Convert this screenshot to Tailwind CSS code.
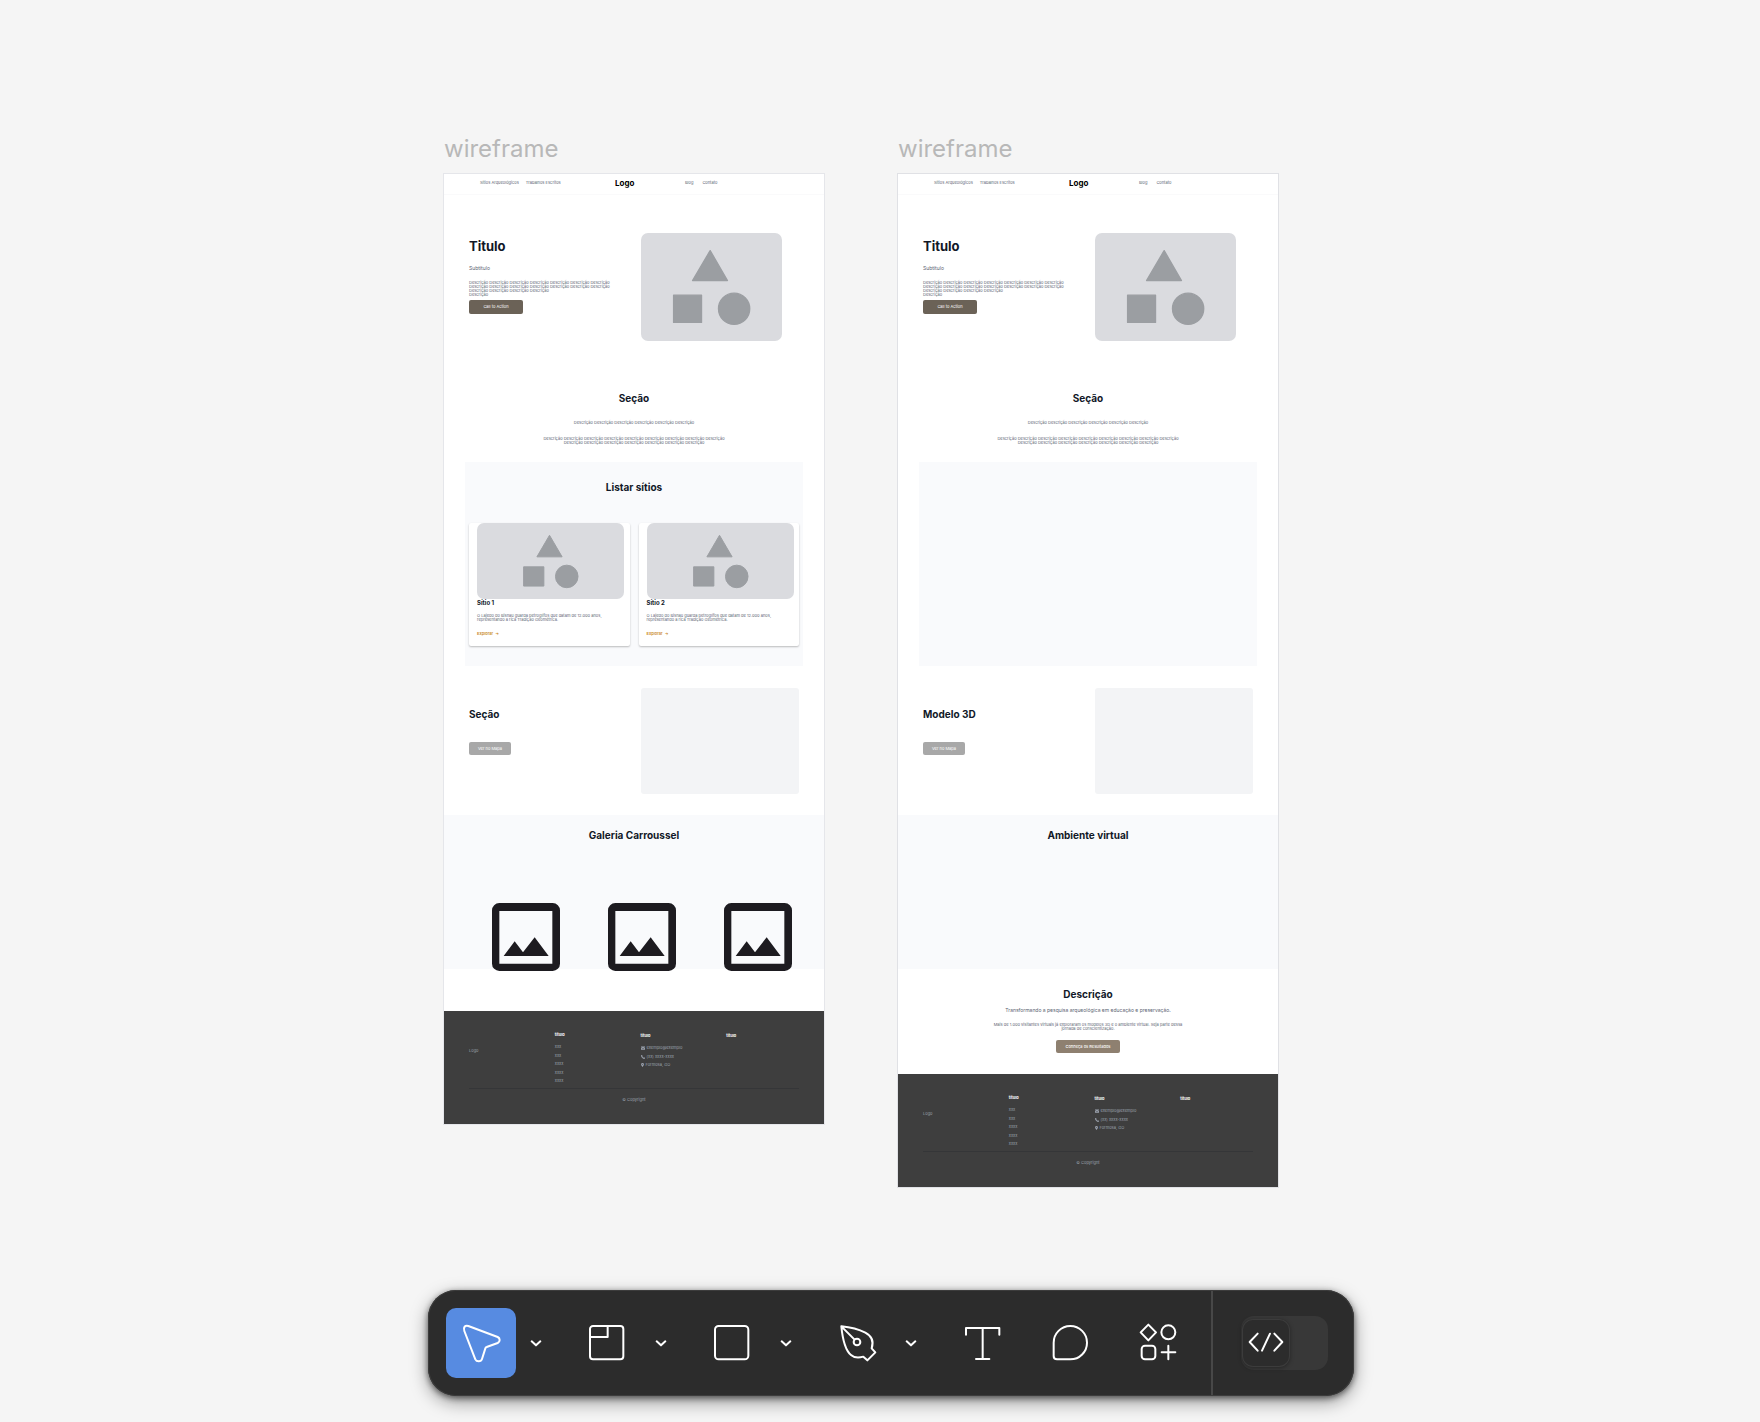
<!DOCTYPE html>
<html lang="pt-BR">
<head>
<meta charset="utf-8">
<meta name="viewport" content="width=device-width, initial-scale=1">
<title>wireframe</title>
<script src="https://cdn.jsdelivr.net/npm/@tailwindcss/browser@4"></script>
</head>
<body class="min-h-screen bg-[#f5f5f5] font-['Inter',sans-serif]">

<!-- Shared shapes -->
<svg class="hidden" aria-hidden="true">
  <symbol id="shapes-lg" viewBox="0 0 424 323">
    <g fill="#9b9ea2" stroke="#9b9ea2" stroke-width="4" stroke-linejoin="round">
      <path d="M208 52 L260 142 H155 Z"/><rect x="98" y="186" width="84" height="82"/><circle cx="280" cy="227" r="47"/>
    </g>
  </symbol>
  <symbol id="shapes-sm" viewBox="0 0 442 229">
    <g fill="#9b9ea2" stroke="#9b9ea2" stroke-width="3" stroke-linejoin="round">
      <path d="M218 37 L256 102 H180 Z"/><rect x="140" y="132" width="61" height="58"/><circle cx="270" cy="161" r="34"/>
    </g>
  </symbol>
  <symbol id="picture" viewBox="0 0 204 204">
    <path fill="#1d1b20" fill-rule="evenodd" d="M22 0H182A22 22 0 0 1 204 22V182A22 22 0 0 1 182 204H22A22 22 0 0 1 0 182V22A22 22 0 0 1 22 0ZM22 24V182H181V24Z"/>
    <path d="M35 159 L68 115 L93 148 L128 103 L170 159 Z" fill="#1d1b20"/>
  </symbol>
  <symbol id="mail" viewBox="0 0 12 12"><path fill="#9ca3af" d="M0 1.500h12v2L6 7 0 3.500zM0 5l6 3.500L12 5v6H0z"/></symbol>
  <symbol id="phone" viewBox="0 0 12 12"><path fill="#9ca3af" d="M0 1l3-1L5.200 3.500 4 4.700C4.700 6.200 5.800 7.300 7.300 8l1.200-1.200L12 8.500 11 12C5 12 0 7 0 1z"/></symbol>
  <symbol id="pin" viewBox="0 0 9 12"><path fill="#9ca3af" fill-rule="evenodd" d="M4.500 0a4.300 4.300 0 0 1 4.300 4.300C8.800 7 4.500 12 4.500 12S.2 7 .2 4.300A4.300 4.300 0 0 1 4.500 0zm0 3a1.400 1.400 0 1 0 0 2.800 1.400 1.400 0 0 0 0-2.800z"/></symbol>
  <symbol id="chevron" viewBox="0 0 36 36"><path d="M5 13 L18 25 L31 13" fill="none" stroke="#fff" stroke-width="6" stroke-linecap="round" stroke-linejoin="round"/></symbol>
</svg>

<main class="flex justify-center gap-[74px] pt-[133px] pr-[38px] pb-[170px] text-[4px] leading-[4px] text-[#5b6472]">

  <section>
    <h2 class="text-2xl leading-8 text-[#b8b8b8]">wireframe</h2>
    <article class="mt-[9px] w-[380px] bg-white shadow-[0_0_0_1px_#e5e6ea]">
      <header class="grid h-[21px] grid-cols-[135px_70px_1fr] items-center border-b border-[#fafafb] pb-[2px] pl-9">
        <nav class="flex gap-[7px]"><a href="#">Sítios Arqueológicos</a><a href="#">Trabalhos Escritos</a></nav>
        <strong class="text-[8px] leading-[10px] font-bold text-black">Logo</strong>
        <nav class="flex gap-[9px]"><a href="#">Blog</a><a href="#">Contato</a></nav>
      </header>
      <section class="grid grid-cols-[172px_141px] px-[25px] pt-[38px]">
        <div class="pt-[5px]">
          <h1 class="text-[13px] leading-4 font-bold text-[#111827]">Titulo</h1>
          <p class="mt-[11px] text-[5px] leading-[6px]">Subtítulo</p>
          <p class="mt-[10px] whitespace-nowrap">Descrição Descrição Descrição Descrição Descrição Descrição Descrição<br>Descrição Descrição Descrição Descrição Descrição Descrição Descrição<br>Descrição Descrição Descrição Descrição<br>Descrição</p>
          <button class="mt-[3px] block h-[14px] w-[54px] rounded-[2px] bg-[#6b6257] text-white">Call to Action</button>
        </div>
        <svg class="h-[108px] w-[141px] rounded-[7px] bg-[#dadbdf]"><use href="#shapes-lg"/></svg>
      </section>
      <section class="pt-[51px] text-center">
        <h2 class="text-[10px] leading-3 font-bold text-[#111827]">Seção</h2>
        <p class="mt-[17px]">Descrição Descrição Descrição Descrição Descrição Descrição</p>
        <p class="mt-[12px]">Descrição Descrição Descrição Descrição Descrição Descrição Descrição Descrição Descrição<br>Descrição Descrição Descrição Descrição Descrição Descrição Descrição</p>
      </section>
      <section class="mx-[21px] mt-[17px] h-[204px] bg-[#f9fafc] px-1 pt-[19px]">
        <h2 class="text-center text-[10px] leading-3 font-bold text-[#111827]">Listar sítios</h2>
        <div class="mt-[30px] grid grid-cols-2 gap-[9px]">
          <div class="h-[123px] rounded-[2px] bg-white px-[8px] shadow-[0_1px_2px_rgba(0,0,0,0.25)]">
            <svg class="h-[76px] w-[147px] rounded-[7px] bg-[#dadbdf]"><use href="#shapes-sm"/></svg>
            <h3 class="mt-px text-[6px] leading-[6px] font-bold text-[#111827]">Sítio 1</h3>
            <p class="mt-2 whitespace-nowrap">O Lajedo do Bisnau guarda petroglifos que datam de 12.000 anos,<br>representando a rica Tradição Geométrica.</p>
            <a href="#" class="mt-[10px] block font-semibold text-[#ca8a2a]">Explorar &nbsp;→</a>
          </div>
          <div class="h-[123px] rounded-[2px] bg-white px-[8px] shadow-[0_1px_2px_rgba(0,0,0,0.25)]">
            <svg class="h-[76px] w-[147px] rounded-[7px] bg-[#dadbdf]"><use href="#shapes-sm"/></svg>
            <h3 class="mt-px text-[6px] leading-[6px] font-bold text-[#111827]">Sítio 2</h3>
            <p class="mt-2 whitespace-nowrap">O Lajedo do Bisnau guarda petroglifos que datam de 12.000 anos,<br>representando a rica Tradição Geométrica.</p>
            <a href="#" class="mt-[10px] block font-semibold text-[#ca8a2a]">Explorar &nbsp;→</a>
          </div>
        </div>
      </section>
      <section class="grid grid-cols-[172px_1fr] px-[25px] pt-[22px] pb-[21px]">
        <div class="pt-5">
          <h2 class="text-[10px] leading-3 font-bold text-[#111827]">Seção</h2>
          <button class="mt-[22px] block h-[13px] w-[42px] rounded-[2px] bg-[#a8a8a8] text-white">Ver no Mapa</button>
        </div>
        <div class="h-[106px] rounded-[3px] bg-[#f3f4f6]"></div>
      </section>
      <section class="h-[154px] bg-[#f9fafc] pt-[14px]">
        <h2 class="text-center text-[10px] leading-3 font-bold text-[#111827]">Galeria Carroussel</h2>
        <div class="mt-[62px] flex gap-12 pl-12">
          <svg class="size-[68px]"><use href="#picture"/></svg>
          <svg class="size-[68px]"><use href="#picture"/></svg>
          <svg class="size-[68px]"><use href="#picture"/></svg>
        </div>
      </section>
      <footer class="mt-[42px] h-[113px] bg-[#3e3e3e] px-[25px] pt-[22px] text-[#9ca3af]">
        <div class="grid h-14 grid-cols-4 gap-x-[13px] border-b border-[#353638]">
          <p class="pt-4">Logo</p>
          <div>
            <h3 class="font-bold text-white">título</h3>
            <ul class="mt-2 flex h-[38px] flex-col justify-between"><li>xxx</li><li>xxx</li><li>xxxx</li><li>xxxx</li><li>xxxx</li></ul>
          </div>
          <div class="pt-px">
            <h3 class="font-bold text-white">título</h3>
            <ul class="mt-2 flex h-[21px] flex-col justify-between">
              <li class="flex gap-[2px]"><svg class="size-[4px]"><use href="#mail"/></svg>exemplo@exemplo</li>
              <li class="flex gap-[2px]"><svg class="size-[4px]"><use href="#phone"/></svg>(xx) xxxx-xxxx</li>
              <li class="flex gap-[2px]"><svg class="h-[4px] w-[3px]"><use href="#pin"/></svg>Formosa, GO</li>
            </ul>
          </div>
          <h3 class="pt-px font-bold text-white">título</h3>
        </div>
        <p class="mt-[9px] text-center">© Copyright</p>
      </footer>
    </article>
  </section>

  <section>
    <h2 class="text-2xl leading-8 text-[#b8b8b8]">wireframe</h2>
    <article class="mt-[9px] w-[380px] bg-white shadow-[0_0_0_1px_#e0e1e5]">
      <header class="grid h-[21px] grid-cols-[135px_70px_1fr] items-center border-b border-[#fafafb] pb-[2px] pl-9">
        <nav class="flex gap-[7px]"><a href="#">Sítios Arqueológicos</a><a href="#">Trabalhos Escritos</a></nav>
        <strong class="text-[8px] leading-[10px] font-bold text-black">Logo</strong>
        <nav class="flex gap-[9px]"><a href="#">Blog</a><a href="#">Contato</a></nav>
      </header>
      <section class="grid grid-cols-[172px_141px] px-[25px] pt-[38px]">
        <div class="pt-[5px]">
          <h1 class="text-[13px] leading-4 font-bold text-[#111827]">Titulo</h1>
          <p class="mt-[11px] text-[5px] leading-[6px]">Subtítulo</p>
          <p class="mt-[10px] whitespace-nowrap">Descrição Descrição Descrição Descrição Descrição Descrição Descrição<br>Descrição Descrição Descrição Descrição Descrição Descrição Descrição<br>Descrição Descrição Descrição Descrição<br>Descrição</p>
          <button class="mt-[3px] block h-[14px] w-[54px] rounded-[2px] bg-[#6b6257] text-white">Call to Action</button>
        </div>
        <svg class="h-[108px] w-[141px] rounded-[7px] bg-[#dadbdf]"><use href="#shapes-lg"/></svg>
      </section>
      <section class="pt-[51px] text-center">
        <h2 class="text-[10px] leading-3 font-bold text-[#111827]">Seção</h2>
        <p class="mt-[17px]">Descrição Descrição Descrição Descrição Descrição Descrição</p>
        <p class="mt-[12px]">Descrição Descrição Descrição Descrição Descrição Descrição Descrição Descrição Descrição<br>Descrição Descrição Descrição Descrição Descrição Descrição Descrição</p>
      </section>
      <div class="mx-[21px] mt-[17px] h-[204px] bg-[#f9fafc]"></div>
      <section class="grid grid-cols-[172px_1fr] px-[25px] pt-[22px] pb-[21px]">
        <div class="pt-5">
          <h2 class="text-[10px] leading-3 font-bold text-[#111827]">Modelo 3D</h2>
          <button class="mt-[22px] block h-[13px] w-[42px] rounded-[2px] bg-[#a8a8a8] text-white">Ver no Mapa</button>
        </div>
        <div class="h-[106px] rounded-[3px] bg-[#f3f4f6]"></div>
      </section>
      <section class="h-[154px] bg-[#f9fafc] pt-[14px]">
        <h2 class="text-center text-[10px] leading-3 font-bold text-[#111827]">Ambiente virtual</h2>
      </section>
      <section class="h-[105px] pt-[19px] text-center">
        <h2 class="text-[10px] leading-3 font-bold text-[#111827]">Descrição</h2>
        <p class="mt-[7px] text-[5px] leading-[6px]">Transformando a pesquisa arqueológica em educação e preservação.</p>
        <p class="mt-[10px]">Mais de 1.000 visitantes virtuais já exploraram os modelos 3D e o ambiente virtual. Seja parte dessa<br>jornada de conscientização.</p>
        <button class="mx-auto mt-[9px] block h-[13px] w-16 rounded-[2px] bg-[#8e8070] font-medium text-white">Conheça os Resultados</button>
      </section>
      <footer class="h-[113px] bg-[#3e3e3e] px-[25px] pt-[22px] text-[#9ca3af]">
        <div class="grid h-14 grid-cols-4 gap-x-[13px] border-b border-[#353638]">
          <p class="pt-4">Logo</p>
          <div>
            <h3 class="font-bold text-white">título</h3>
            <ul class="mt-2 flex h-[38px] flex-col justify-between"><li>xxx</li><li>xxx</li><li>xxxx</li><li>xxxx</li><li>xxxx</li></ul>
          </div>
          <div class="pt-px">
            <h3 class="font-bold text-white">título</h3>
            <ul class="mt-2 flex h-[21px] flex-col justify-between">
              <li class="flex gap-[2px]"><svg class="size-[4px]"><use href="#mail"/></svg>exemplo@exemplo</li>
              <li class="flex gap-[2px]"><svg class="size-[4px]"><use href="#phone"/></svg>(xx) xxxx-xxxx</li>
              <li class="flex gap-[2px]"><svg class="h-[4px] w-[3px]"><use href="#pin"/></svg>Formosa, GO</li>
            </ul>
          </div>
          <h3 class="pt-px font-bold text-white">título</h3>
        </div>
        <p class="mt-[9px] text-center">© Copyright</p>
      </footer>
    </article>
  </section>
</main>

<!-- Floating toolbar -->
<div class="fixed inset-x-0 bottom-[26px] flex justify-center pl-[22px]">
  <div role="toolbar" aria-label="Ferramentas" class="flex h-[106px] items-center rounded-[28px] bg-[#2c2c2c] pr-[26px] pl-[18px] shadow-[inset_0_0_0_1px_#3c3c3c,0_2px_6px_rgba(0,0,0,0.55),0_6px_18px_rgba(0,0,0,0.4)]">
    <div class="flex gap-[15px]">
      <div class="flex">
        <button aria-label="Mover" class="flex size-[70px] items-center justify-center rounded-[10px] bg-[#578be1]">
          <svg class="size-10 overflow-visible" viewBox="0 0 120 120" fill="none" stroke="#fff" stroke-width="6" stroke-linejoin="round"><path d="M10 24 C6 13 12 6 22 9 L110 42 C118 46 118 56 110 60 L77 72 Q74 73 73 76 L63 108 C60 117 47 117 43 109 Z"/></svg>
        </button>
        <button aria-label="Opções de mover" class="flex w-10 items-center justify-center"><svg class="size-3"><use href="#chevron"/></svg></button>
      </div>
      <div class="flex">
        <button aria-label="Quadro" class="flex size-[70px] items-center justify-center">
          <svg class="size-10 overflow-visible" viewBox="0 0 120 120" fill="none" stroke="#fff" stroke-width="6" stroke-linejoin="round"><rect x="12" y="9" width="100" height="100" rx="9"/><path d="M65 9 V42 H12"/></svg>
        </button>
        <button aria-label="Opções de quadro" class="flex w-10 items-center justify-center"><svg class="size-3"><use href="#chevron"/></svg></button>
      </div>
      <div class="flex">
        <button aria-label="Retângulo" class="flex size-[70px] items-center justify-center">
          <svg class="size-10 overflow-visible" viewBox="0 0 120 120" fill="none" stroke="#fff" stroke-width="6"><rect x="12" y="9" width="100" height="100" rx="11"/></svg>
        </button>
        <button aria-label="Opções de forma" class="flex w-10 items-center justify-center"><svg class="size-3"><use href="#chevron"/></svg></button>
      </div>
      <div class="flex">
        <button aria-label="Caneta" class="flex size-[70px] items-center justify-center">
          <svg class="size-10 overflow-visible" viewBox="0 0 120 120" fill="none" stroke="#fff" stroke-width="6" stroke-linejoin="round" stroke-linecap="round"><path d="M16 10 C45 13 70 20 88 29 C111 41 113 58 107 76 L118 88 L94 112 L82 101 C72 104 55 105 45 96 C28 82 20 50 16 10 L55 49"/><circle cx="63" cy="57" r="10"/></svg>
        </button>
        <button aria-label="Opções de caneta" class="flex w-10 items-center justify-center"><svg class="size-3"><use href="#chevron"/></svg></button>
      </div>
    </div>
    <div class="ml-4 flex gap-[18px]">
      <button aria-label="Texto" class="flex size-[70px] items-center justify-center">
        <svg class="size-10 overflow-visible" viewBox="0 0 120 120" fill="none" stroke="#fff" stroke-width="6" stroke-linejoin="round" stroke-linecap="round"><path d="M12 35 V15 H112 V35 M62 15 V108 M42 108 H82"/></svg>
      </button>
      <button aria-label="Comentário" class="flex size-[70px] items-center justify-center">
        <svg class="size-10 overflow-visible" viewBox="0 0 120 120" fill="none" stroke="#fff" stroke-width="6"><path d="M61 9 A50 50 0 0 1 61 109 H21 Q11 109 11 99 V59 A50 50 0 0 1 61 9 Z"/></svg>
      </button>
      <button aria-label="Ações" class="flex size-[70px] items-center justify-center">
        <svg class="size-10 overflow-visible" viewBox="0 0 120 120" fill="none" stroke="#fff" stroke-width="6" stroke-linejoin="round" stroke-linecap="round"><path d="M31 5 L54 28 L31 52 L8 28 Z"/><circle cx="91" cy="28" r="21"/><rect x="11" y="68" width="41" height="41" rx="10"/><path d="M91 68 V109 M71 88 H112"/></svg>
      </button>
    </div>
    <div class="ml-[18px] h-[104px] w-[2px] bg-[#484848]"></div>
    <label class="ml-7 flex h-[54px] w-[87px] items-center rounded-[13px] bg-[#383838] pl-px">
      <input type="checkbox" role="switch" aria-label="Modo de desenvolvimento" class="sr-only">
      <span class="size-12 rounded-[11px] bg-[#2c2c2c] shadow-[inset_0_0_0_1px_#3c3c3c,0_1px_4px_rgba(0,0,0,0.35)]">
        <svg class="size-12" viewBox="0 0 144 144" fill="none" stroke="#fff" stroke-width="6" stroke-linejoin="round" stroke-linecap="round"><path d="M47 44 L23 69 L47 95 M84 44 L60 95 M97 44 L121 69 L97 95"/></svg>
      </span>
    </label>
  </div>
</div>
</body>
</html>
